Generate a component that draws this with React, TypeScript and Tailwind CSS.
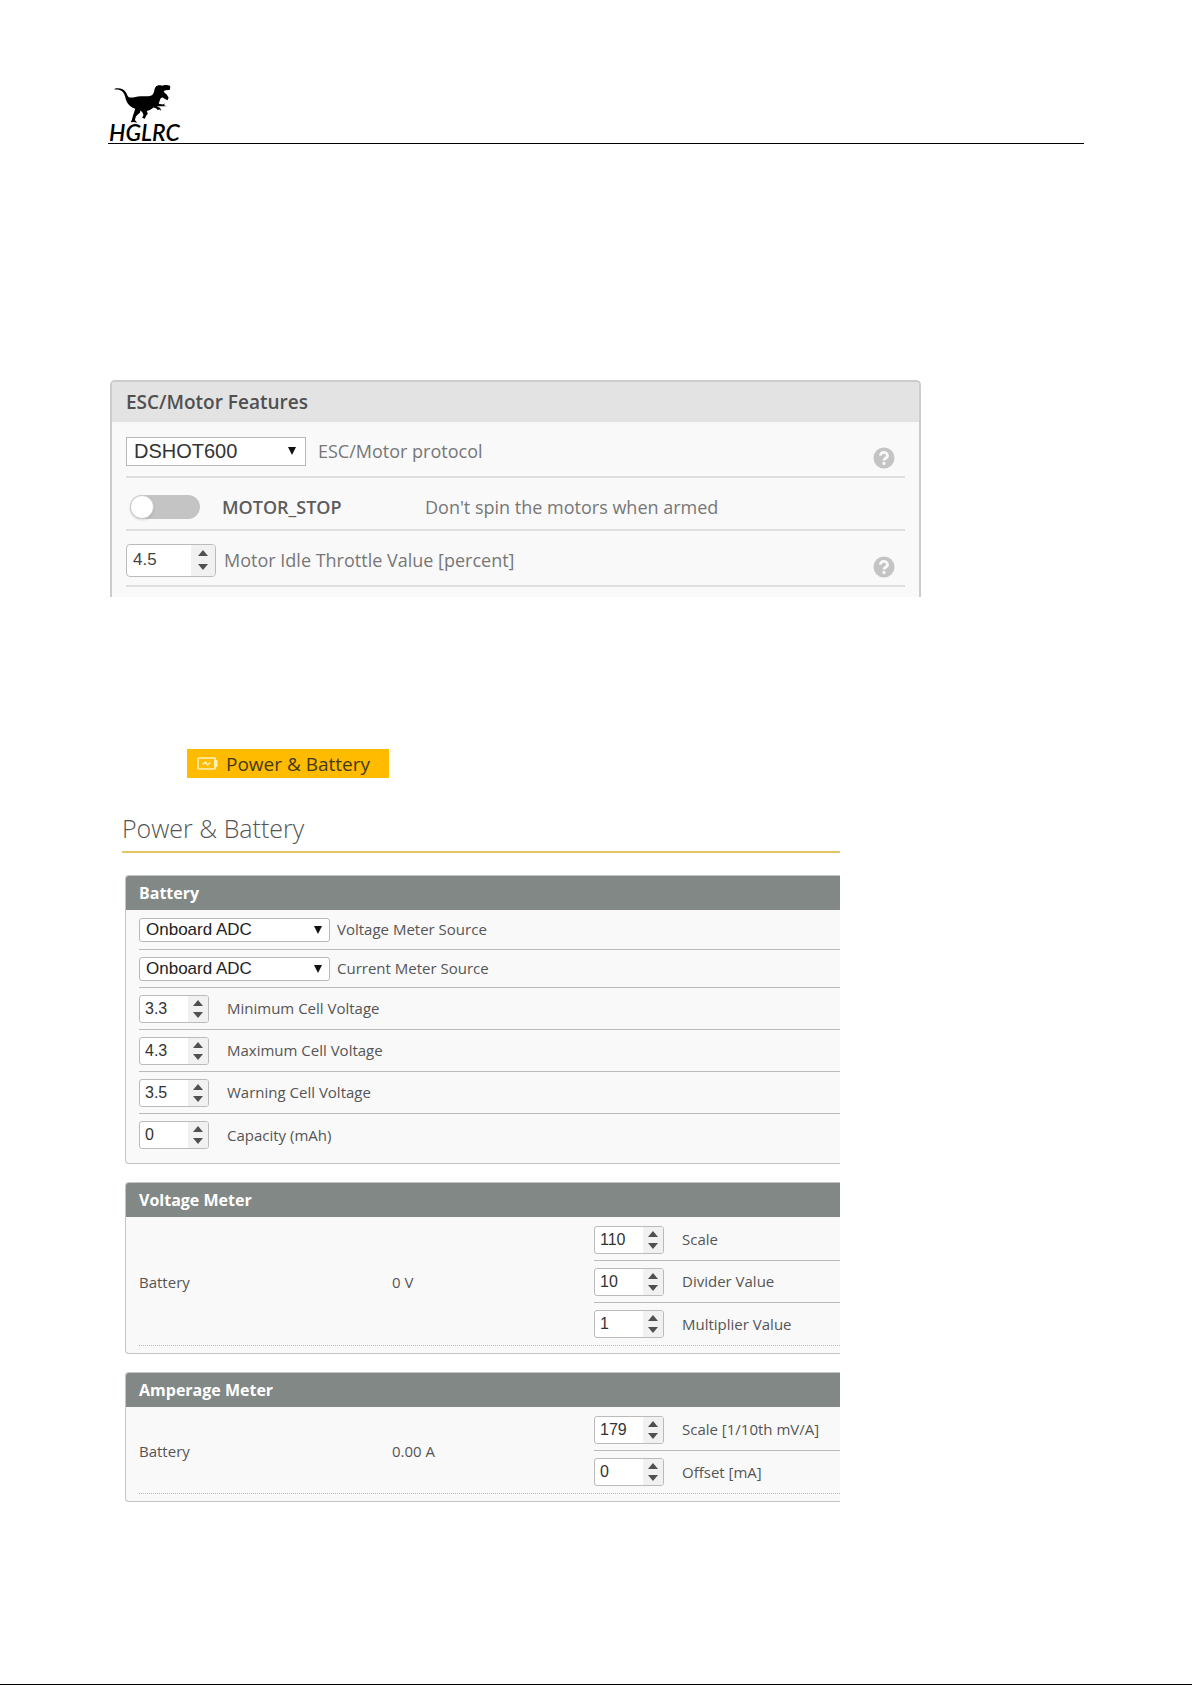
import { useState } from 'react'

const DinoLogo = () => (
    <svg viewBox="0 0 170 118" className="ml-1.5 block h-[39px] w-[57px]" fill="currentColor" aria-hidden="true">
        <path d="M1 11 C14 8 29 11 36 24 C39 31 41 36 46 38 C58 39 66 34 80 34 C96 34 108 36 116 29 C121 23 120 13 124 7 C128 1 136 0 144 2 L152 0 C160 0 166 0 169 4 L168 14 L156 16 L149 18 L151 23 L158 29 L164 38 L161 46 L153 42 L146 38 C141 38 138 43 137 48 L134 57 L146 59 L153 56 L150 61 L158 64 L144 64 L134 64 L128 65 L138 69 L142 78 L136 74 L131 76 L126 70 L118 68 C112 74 105 76 98 79 L101 87 L96 93 L92 102 L84 99 L88 91 L85 83 L79 77 L77 84 L70 90 L65 95 L62 106 L69 114 L58 112 L49 113 L53 105 L56 93 L59 85 L63 72 C52 68 44 62 38 52 C33 42 32 26 23 19 C17 14 9 13 1 14 Z" />
    </svg>
)

const HelpIcon = () => (
    <svg viewBox="0 0 22 22" className="size-[22px] shrink-0" role="img" aria-label="Help">
        <circle cx="11" cy="11" r="10.5" fill="#c4c4c4" />
        <path d="M7.6 8.6a3.4 3.1 0 1 1 5.2 2.5c-1.2.8-1.8 1.1-1.8 2.4" fill="none" stroke="#f9f9f9" strokeWidth="2.8" />
        <circle cx="11" cy="16.4" r="1.6" fill="#f9f9f9" />
    </svg>
)

const BatteryIcon = () => (
    <svg viewBox="0 0 21 13" className="h-[13px] w-[21px]" fill="none" stroke="#fff0b8" aria-hidden="true">
        <rect x="1" y="1" width="17" height="11" rx="1" strokeWidth="1.6" />
        <path d="M17.5 1h1v2.5h1.5v6h-1.5V12h-1z" fill="#fff0b8" strokeWidth="1" />
        <path d="M5.5 7.5 8.5 5l2 3 3-2.5" strokeWidth="1.4" />
    </svg>
)

type SelectProps = { id: string; value: string; large?: boolean }

const SelectBox = ({ id, value, large }: SelectProps) => (
    <div className="relative shrink-0">
        <select
            id={id}
            defaultValue={value}
            className={
                large
                    ? "block h-[29px] w-[180px] appearance-none border border-[#b8b8b8] bg-white pl-[7px] font-['Liberation_Sans',sans-serif] text-[20px] leading-[26px] text-[#333]"
                    : "block h-6 w-[191px] appearance-none rounded-[3px] border border-[#b8b8b8] bg-white pl-1.5 font-['Liberation_Sans',sans-serif] text-[17px] leading-[22px] text-[#222]"
            }
        >
            <option>{value}</option>
        </select>
        <svg
            viewBox="0 0 8 8"
            className={large ? 'pointer-events-none absolute top-2.5 right-2.5 size-2' : 'pointer-events-none absolute top-2 right-2 size-2'}
            aria-hidden="true"
        >
            <path d="M0 0h8L4 8z" fill="#111" />
        </svg>
    </div>
)

type NumberProps = { id: string; value: number; step?: number; large?: boolean }

const NumberBox = ({ id, value, step = 1, large }: NumberProps) => {
    const [current, setCurrent] = useState(String(value))
    const change = (by: number) => setCurrent(String(Number((Number(current) + by).toFixed(1))))

    return (
        <div
            className={
                large
                    ? 'flex h-[33px] w-[90px] shrink-0 overflow-hidden rounded-[4px] border border-[#bbb] bg-white'
                    : 'flex h-7 w-[70px] shrink-0 overflow-hidden rounded-[3px] border border-[#bbb] bg-white'
            }
        >
            <input
                id={id}
                type="number"
                step={step}
                value={current}
                onChange={(e) => setCurrent(e.target.value)}
                className={
                    large
                        ? "w-0 grow [appearance:textfield] pl-1.5 font-['Liberation_Sans',sans-serif] text-[17px] text-[#444] outline-none [&::-webkit-inner-spin-button]:appearance-none"
                        : "w-0 grow [appearance:textfield] pl-[5px] font-['Liberation_Sans',sans-serif] text-base text-[#333] outline-none [&::-webkit-inner-spin-button]:appearance-none"
                }
            />
            <div className={large ? 'flex w-6 flex-col justify-center gap-2 bg-[#f1f1f1]' : 'flex w-5 flex-col justify-center gap-1.5 bg-[#f1f1f1]'}>
                <button type="button" aria-label="Increase" className="flex justify-center" onClick={() => change(step)}>
                    <svg viewBox="0 0 10 6" className="h-1.5 w-2.5"><path d="M5 0l5 6H0z" fill="#505050" /></svg>
                </button>
                <button type="button" aria-label="Decrease" className="flex justify-center" onClick={() => change(-step)}>
                    <svg viewBox="0 0 10 6" className="h-1.5 w-2.5"><path d="M5 6l5-6H0z" fill="#505050" /></svg>
                </button>
            </div>
        </div>
    )
}

type Field = { id: string; label: string; value: number; step?: number }

const cells: Field[] = [
    { id: 'min-cell', label: 'Minimum Cell Voltage', value: 3.3, step: 0.1 },
    { id: 'max-cell', label: 'Maximum Cell Voltage', value: 4.3, step: 0.1 },
    { id: 'warn-cell', label: 'Warning Cell Voltage', value: 3.5, step: 0.1 },
    { id: 'capacity', label: 'Capacity (mAh)', value: 0 },
]

const voltage: Field[] = [
    { id: 'v-scale', label: 'Scale', value: 110 },
    { id: 'v-divider', label: 'Divider Value', value: 10 },
    { id: 'v-multiplier', label: 'Multiplier Value', value: 1 },
]

const amperage: Field[] = [
    { id: 'a-scale', label: 'Scale [1/10th mV/A]', value: 179 },
    { id: 'a-offset', label: 'Offset [mA]', value: 0 },
]

const FieldRows = ({ fields }: { fields: Field[] }) => (
    <>
        {fields.map((field) => (
            <div key={field.id} className="flex h-[42px] items-center gap-[18px] border-b border-[#bbb] last:border-b-0">
                <NumberBox id={field.id} value={field.value} step={field.step} />
                <label htmlFor={field.id} className="whitespace-nowrap">{field.label}</label>
            </div>
        ))}
    </>
)

const Panel = ({ title, children }: { title: string; children: React.ReactNode }) => (
    <section className="ml-[3px] overflow-hidden rounded-l-[4px] border border-r-0 border-[#c4c4c4] bg-[#f9f9f9]">
        <h2 className="h-[34px] bg-[#828885] pl-[13px] text-base leading-[34px] font-bold text-white">{title}</h2>
        {children}
    </section>
)

const Meter = ({ title, reading, fields }: { title: string; reading: string; fields: Field[] }) => (
    <Panel title={title}>
        <div className="mb-[7px] ml-[13px] flex items-center border-b border-dotted border-[#bbb] pt-0.5">
            <span className="w-[253px] shrink-0">Battery</span>
            <span className="w-[202px] shrink-0">{reading}</span>
            <div className="grow">
                <FieldRows fields={fields} />
            </div>
        </div>
    </Panel>
)

const App = () => {
    const [motorStop, setMotorStop] = useState(false)

    return (
        <div className="flex min-h-screen flex-col border-b border-black bg-white font-['Open_Sans',sans-serif] text-[15px] text-[#555]">
            <div className="px-[108px] pt-[85px]">
                <header className="border-b border-black text-black">
                    <DinoLogo />
                    <div className="h-[19px] pl-px font-['Lato',sans-serif] text-[23px] leading-[16px] font-semibold italic">HGLRC</div>
                </header>

                <section className="mt-[236px] ml-0.5 h-[217px] max-w-[811px] overflow-hidden rounded-t-[5px] border-2 border-b-0 border-[#ccc] bg-[#f9f9f9] text-lg">
                    <h2 className="h-10 bg-[#e3e3e3] pl-3.5 text-[19px] leading-[40px] font-semibold text-[#505050]">ESC/Motor Features</h2>
                    <div className="mx-3.5">
                        <div className="flex h-14 items-center border-b-2 border-[#dedede] pt-1">
                            <SelectBox id="protocol" value="DSHOT600" large />
                            <label htmlFor="protocol" className="ml-3 text-[#777]">ESC/Motor protocol</label>
                            <span className="mt-3.5 mr-2.5 ml-auto"><HelpIcon /></span>
                        </div>
                        <div className="flex h-[53px] items-center border-b-2 border-[#dedede] pt-1.5">
                            <label className="flex w-[299px] items-center font-semibold text-[#5c5c5c]">
                                <input type="checkbox" role="switch" className="peer sr-only" checked={motorStop} onChange={() => setMotorStop(!motorStop)} />
                                <span className="mr-[22px] ml-1 flex h-6 w-[70px] items-center rounded-full bg-[#c4c4c4] peer-checked:justify-end peer-checked:bg-[#ffbb00]">
                                    <span className="size-6 rounded-full border border-[#ccc] bg-white shadow" />
                                </span>
                                MOTOR_STOP
                            </label>
                            <span className="text-[#777]">Don't spin the motors when armed</span>
                        </div>
                        <div className="flex h-14 items-center border-b-2 border-[#dedede] pt-1">
                            <NumberBox id="idle" value={4.5} step={0.1} large />
                            <label htmlFor="idle" className="ml-2 text-[#777]">Motor Idle Throttle Value [percent]</label>
                            <span className="mt-3.5 mr-2.5 ml-auto"><HelpIcon /></span>
                        </div>
                    </div>
                </section>

                <button type="button" className="mt-[152px] ml-[79px] flex h-[29px] w-[202px] items-center gap-2 bg-[#ffbb00] pl-2.5 text-[19px] leading-7 text-[#443a1c]">
                    <BatteryIcon />
                    Power & Battery
                </button>

                <main className="mt-[30px] ml-3.5 max-w-[718px]">
                    <h1 className="mb-[22px] h-[45px] border-b-2 border-[#e2c763] text-[25px] leading-[40px] font-light text-[#555]">Power & Battery</h1>

                    <div className="flex flex-col gap-[18px]">
                        <Panel title="Battery">
                            <div className="ml-[13px] pb-[7px]">
                                {['Voltage', 'Current'].map((kind) => (
                                    <div key={kind} className="flex h-[38px] items-center gap-[7px] border-b border-[#bbb] first:h-10">
                                        <SelectBox id={kind} value="Onboard ADC" />
                                        <label htmlFor={kind}>{kind} Meter Source</label>
                                    </div>
                                ))}
                                <FieldRows fields={cells} />
                            </div>
                        </Panel>
                        <Meter title="Voltage Meter" reading="0 V" fields={voltage} />
                        <Meter title="Amperage Meter" reading="0.00 A" fields={amperage} />
                    </div>
                </main>
            </div>
        </div>
    )
}

export default App
